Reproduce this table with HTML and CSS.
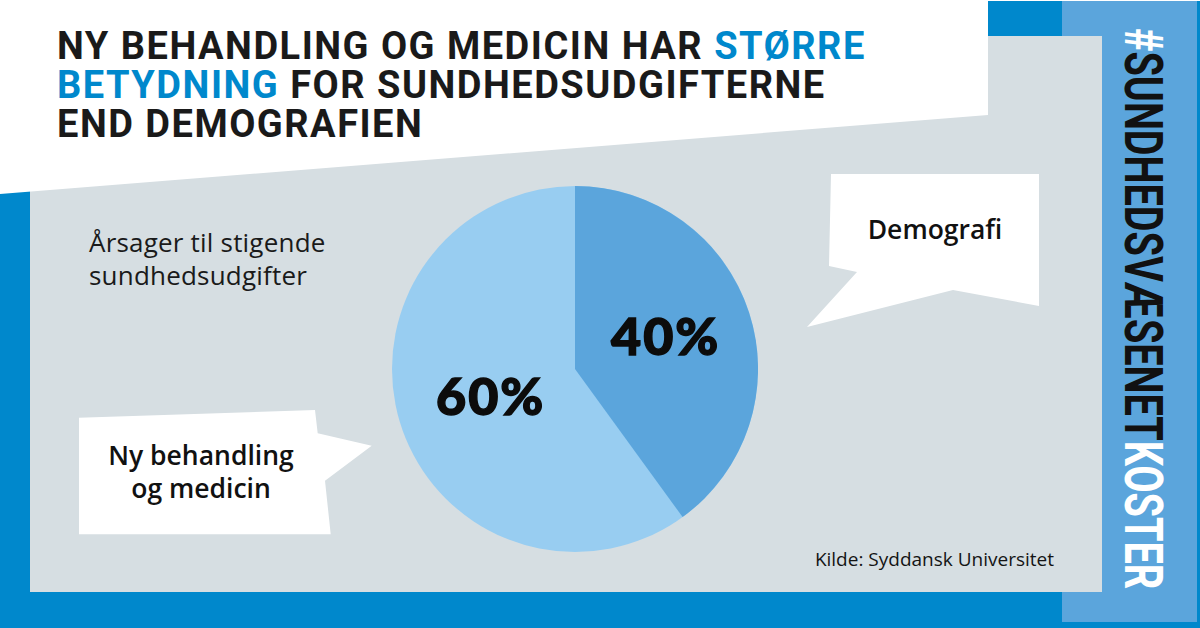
FILE: index.html
```html
<!DOCTYPE html>
<html lang="da">
<head>
<meta charset="utf-8">
<title>Ny behandling og medicin</title>
<link rel="stylesheet" href="styles.css">
</head>
<body>
<div class="poster">
  <aside class="sidebar">
    <span class="hashtag"><span class="hl">#</span>SUNDHEDSVÆSENET<span class="hl">KOSTER</span></span>
  </aside>

  <section class="panel">
    <div class="intro">
      <p class="intro-text">Årsager til stigende<br>sundhedsudgifter</p>
    </div>
    <div class="pie">
      <svg class="pie-svg" width="366" height="366" viewBox="0 0 366 366" aria-hidden="true">
        <circle cx="183" cy="183" r="183" fill="#98cdf1"/>
        <path d="M183 183 L183 0 A183 183 0 0 1 290.6 331.05 Z" fill="#5ba5dc"/>
      </svg>
      <span class="pct pct-40">40%</span>
      <span class="pct pct-60">60%</span>
    </div>
    <div class="aside">
      <p class="source">Kilde: Syddansk Universitet</p>
    </div>

    <div class="bubble bubble-demo"><span class="bubble-text">Demografi</span></div>
    <div class="bubble bubble-new"><span class="bubble-text">Ny behandling<br>og medicin</span></div>
  </section>

  <header class="masthead">
    <h1 class="title">NY BEHANDLING OG MEDICIN HAR <span class="accent">STØRRE</span><br><span class="accent">BETYDNING</span> FOR SUNDHEDSUDGIFTERNE<br>END DEMOGRAFIEN</h1>
  </header>
</div>
</body>
</html>
```

FILE: styles.css
```css
* { box-sizing: border-box; }

html, body {
  margin: 0;
  padding: 0;
}

body {
  width: 1200px;
  height: 628px;
  overflow: hidden;
  font-family: "Open Sans", "Liberation Sans", sans-serif;
  color: #141414;
}

.poster {
  width: 1200px;
  height: 628px;
  display: grid;
  grid-template-columns: 30px 958px 74px 40px 95px 3px;
  grid-template-rows: 1px 35px 79px 79px 398px 30px 6px;
  background: linear-gradient(#ffffff 0 1px, #0088cc 1px);
}

/* right light-blue column with hashtag */
.sidebar {
  grid-column: 4 / 6;
  grid-row: 2 / 7;
  background: #5ba5dc;
  display: flex;
  align-items: flex-start;
  padding-left: 54px;
  padding-top: 27px;
}

.hashtag {
  writing-mode: vertical-rl;
  font-family: Roboto, "Liberation Sans", sans-serif;
  font-weight: 700;
  font-size: 53px;
  line-height: 53px;
  color: #111;
  white-space: nowrap;
  transform: scaleY(0.747);
  transform-origin: top center;
}

.hashtag .hl { color: #ffffff; }

/* grey chart panel */
.panel {
  grid-column: 2 / 5;
  grid-row: 3 / 6;
  background: #d6dee2;
  position: relative;
  display: flex;
}

.intro {
  width: 362px;
  padding-left: 59px;
  padding-top: 190px;
}

.intro-text {
  margin: 0;
  font-size: 26px;
  line-height: 33px;
  font-weight: 400;
  letter-spacing: 0.2px;
  color: #1a1a1a;
  white-space: nowrap;
}

.pie {
  position: relative;
  width: 366px;
  height: 366px;
  margin-top: 150px;
  flex: none;
}

.pie-svg { display: block; }

.pct {
  position: absolute;
  font-family: Lato, "DejaVu Sans", sans-serif;
  font-weight: 900;
  font-size: 52px;
  line-height: 52px;
  letter-spacing: 2px;
  -webkit-text-stroke: 1.4px #0c0c0c;
  color: #0c0c0c;
  white-space: nowrap;
}

.pct-40 { left: 219px; top: 123px; }
.pct-60 { left: 44px; top: 183px; }

.aside {
  flex: 1;
  display: flex;
  flex-direction: column;
  justify-content: flex-end;
  align-items: flex-end;
  padding-right: 48px;
  padding-bottom: 21px;
}

.source {
  margin: 0;
  font-size: 19px;
  line-height: 24px;
  color: #141414;
  white-space: nowrap;
}

/* speech bubbles */
.bubble {
  position: absolute;
  background: #ffffff;
  text-align: center;
}

.bubble-text {
  display: block;
  font-size: 26.5px;
  line-height: 33px;
  font-weight: 600;
  color: #111;
  white-space: nowrap;
}

.bubble-demo {
  left: 777px;
  top: 138px;
  width: 232px;
  height: 153px;
  clip-path: polygon(24px 0, 232px 0, 232px 132px, 146px 116px, 0 153px, 50px 98px, 22px 92px);
  padding-left: 24px;
  padding-top: 39px;
}

.bubble-new {
  left: 49px;
  top: 374px;
  width: 293px;
  height: 125px;
  clip-path: polygon(0 7.7px, 236px 0, 238.7px 23.3px, 292.7px 35.7px, 246px 70.7px, 251.7px 124.3px, 0 124.3px);
  padding-top: 29px;
}

.bubble-new .bubble-text { width: 244px; }

/* white title block */
.masthead {
  grid-column: 1 / 3;
  grid-row: 1 / 5;
  background: #ffffff;
  clip-path: polygon(0 0, 100% 0, 100% 115px, 0 100%);
  padding-left: 57px;
  padding-top: 27px;
}

.title {
  margin: 0;
  font-family: Roboto, "Liberation Sans", sans-serif;
  font-weight: 700;
  font-size: 38px;
  line-height: 39px;
  letter-spacing: 1.5px;
  color: #1a1a1a;
  white-space: nowrap;
}

.title .accent { color: #0088cc; }
```
